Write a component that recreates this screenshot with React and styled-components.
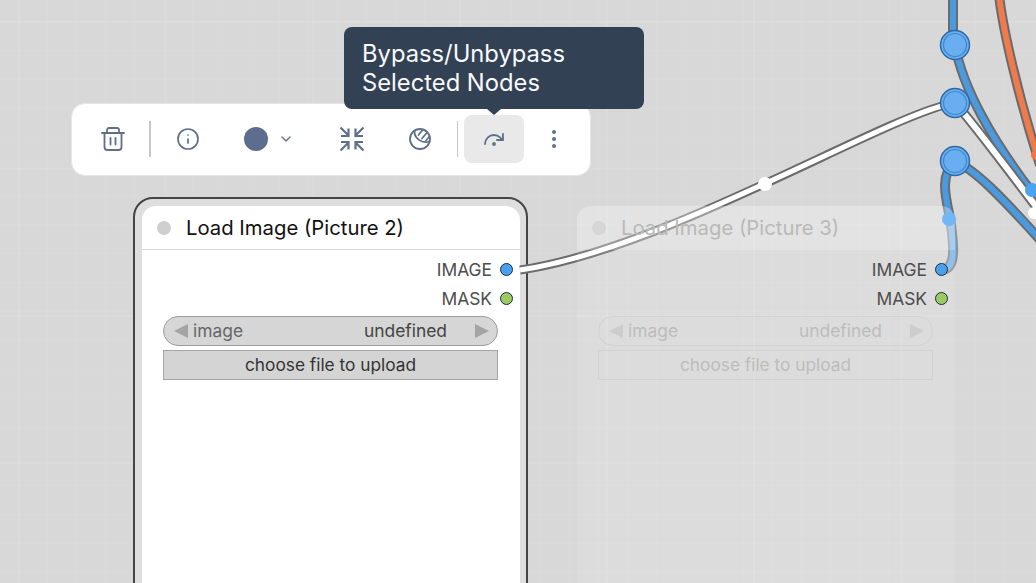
import React from "react";
import styled, { createGlobalStyle } from "styled-components";
import { ChevronDown, EllipsisVertical, Info, RedoDot } from "lucide-react";

const GlobalStyle = createGlobalStyle`
  html, body {
    margin: 0;
    height: 100%;
    overflow: hidden;
    font-family: "Inter", "Liberation Sans", sans-serif;
  }
`;

const Canvas = styled.div`
  position: relative;
  width: 1036px;
  height: 583px;
  overflow: hidden;
  background-color: #d8d8d8;
  background-image:
    linear-gradient(rgba(255, 255, 255, 0.08) 2px, transparent 2px),
    linear-gradient(90deg, rgba(255, 255, 255, 0.08) 2px, transparent 2px),
    linear-gradient(rgba(255, 255, 255, 0.05) 1px, transparent 1px),
    linear-gradient(90deg, rgba(255, 255, 255, 0.05) 1px, transparent 1px);
  background-size: 147px 147px, 147px 147px, 29px 29px, 29px 29px;
  background-position: 0 21px, 18px 0, 0 21px, 18px 0;
`;

const Wires = styled.svg`
  position: absolute;
  inset: 0;
`;

const Toolbar = styled.div`
  position: absolute;
  left: 71px;
  top: 103px;
  box-sizing: border-box;
  width: 520px;
  height: 73px;
  display: flex;
  align-items: center;
  padding: 0 5px 1px 11px;
  background: #fff;
  border: 1px solid #e6e6e6;
  border-radius: 14px;
  color: #5f6f8a;
`;

const ToolButton = styled.div`
  box-sizing: border-box;
  width: ${(p) => p.$width || 60}px;
  height: 48px;
  margin-left: ${(p) => p.$gap || 0}px;
  margin-right: ${(p) => p.$gapRight || 0}px;
  display: flex;
  align-items: center;
  justify-content: center;
  gap: 10px;
  border-radius: 8px;
  background: ${(p) => (p.$active ? "#e9e9e9" : "transparent")};
`;

const Divider = styled.div`
  width: ${(p) => (p.$thin ? 1 : 2)}px;
  height: 36px;
  margin: ${(p) => (p.$thin ? "0 6px 0 7px" : "0 7px 0 6px")};
  background: #c4c8ce;
`;

const Swatch = styled.span`
  width: 24px;
  height: 24px;
  border-radius: 50%;
  background: #5d6d8e;
`;

const Tooltip = styled.div`
  position: absolute;
  left: 344px;
  top: 27px;
  box-sizing: border-box;
  width: 300px;
  height: 82px;
  padding: 12px 18px;
  border-radius: 8px;
  background: #334155;
  color: #f8fafc;
  font-size: 23.75px;
  line-height: 29px;

  &::after {
    content: "";
    position: absolute;
    left: 143px;
    bottom: -6px;
    border-left: 7px solid transparent;
    border-right: 7px solid transparent;
    border-top: 6px solid #334155;
  }
`;

const SelectionFrame = styled.div`
  position: absolute;
  left: 133px;
  top: 197px;
  box-sizing: border-box;
  width: 395px;
  height: 480px;
  padding: 7px;
  border: 2px solid #444;
  border-radius: 20px;
  background: #dedede;
`;

const GhostSlot = styled.div`
  position: absolute;
  left: 577px;
  top: 206px;
  width: 378px;
  height: 471px;
`;

const Node = styled.div`
  width: 378px;
  height: 100%;
  border-radius: 14px;
  background: ${(p) => (p.$ghost ? "rgba(255, 255, 255, 0.12)" : "#fff")};
`;

const NodeHeader = styled.div`
  box-sizing: border-box;
  height: 44px;
  display: flex;
  align-items: center;
  gap: 15px;
  padding-left: 15px;
  border-radius: 14px 14px 0 0;
  border-bottom: 1px solid ${(p) => (p.$ghost ? "transparent" : "#d9d9d9")};
  background: ${(p) => (p.$ghost ? "rgba(255, 255, 255, 0.22)" : "transparent")};
  color: ${(p) => (p.$ghost ? "#b9b9b9" : "#111")};
  font-size: 20.3px;
`;

const StatusDot = styled.span`
  width: 14px;
  height: 14px;
  border-radius: 50%;
  background: ${(p) => (p.$ghost ? "#d6d6d6" : "#cfcfcf")};
`;

const NodeBody = styled.div`
  padding: 5px 0 0;
`;

const Output = styled.div`
  height: 29px;
  display: flex;
  align-items: center;
  justify-content: flex-end;
  gap: 8px;
  padding-right: 7px;
  color: #4d4d4d;
  font-size: 17.4px;
`;

const Port = styled.span`
  box-sizing: border-box;
  width: 13px;
  height: 13px;
  border-radius: 50%;
  border: 1.5px solid #1d2f3f;
  background: ${(p) => p.$color};
`;

const Combo = styled.div`
  box-sizing: border-box;
  height: 30px;
  margin: 3px 22px 0 21px;
  display: flex;
  align-items: center;
  padding: 0 8px 1px 10px;
  border-radius: 15px;
  border: 1.5px solid ${(p) => (p.$ghost ? "#d2d2d2" : "#9c9c9c")};
  background: ${(p) => (p.$ghost ? "transparent" : "#d6d6d6")};
  color: ${(p) => (p.$ghost ? "#bcbcbc" : "#444")};
  font-size: 17.4px;
`;

const ComboLabel = styled.span`
  margin-left: 5px;
  color: ${(p) => (p.$ghost ? "#bcbcbc" : "#666")};
`;

const ComboValue = styled.span`
  margin-left: auto;
  margin-right: 28px;
`;

const Arrow = styled.span`
  width: 0;
  height: 0;
  border-top: 7px solid transparent;
  border-bottom: 7px solid transparent;
  border-right: ${(p) => (p.$right ? "0" : `14px solid ${p.$ghost ? "#cdcdcd" : "#a4a4a4"}`)};
  border-left: ${(p) => (p.$right ? `14px solid ${p.$ghost ? "#cdcdcd" : "#a4a4a4"}` : "0")};
`;

const UploadButton = styled.div`
  box-sizing: border-box;
  height: 30px;
  margin: 4px 22px 0 21px;
  padding-bottom: 1px;
  display: flex;
  align-items: center;
  justify-content: center;
  border: 1.5px solid ${(p) => (p.$ghost ? "#d2d2d2" : "#a4a4a4")};
  background: ${(p) => (p.$ghost ? "transparent" : "#d4d4d4")};
  color: ${(p) => (p.$ghost ? "#bcbcbc" : "#333")};
  font-size: 17.3px;
`;

function TrashIcon() {
  return (
    <svg width="24" height="24" viewBox="0 0 24 24" fill="none" stroke="currentColor" strokeWidth="1.8" strokeLinecap="round" strokeLinejoin="round">
      <path d="M1 6h22" />
      <path d="M6 6V3a2 2 0 0 1 2-2h8a2 2 0 0 1 2 2v3" />
      <path d="M3.5 6v14a3 3 0 0 0 3 3h11a3 3 0 0 0 3-3V6" />
      <path d="M9.5 11v6.5M14.5 11v6.5" />
    </svg>
  );
}

function CollapseIcon() {
  return (
    <svg width="26" height="26" viewBox="0 0 26 26" fill="none" stroke="currentColor" strokeWidth="2.2" strokeLinejoin="miter">
      <path d="M1.500 1.500L9 9M2 10H9.500V2.500" />
      <path d="M24.500 1.500L17 9M24 10H16.500V2.500" />
      <path d="M1.500 24.500L9 17M2 16H9.500V23.500" />
      <path d="M24.500 24.500L17 17M24 16H16.500V23.500" />
    </svg>
  );
}

function PaletteIcon() {
  return (
    <svg width="24" height="24" viewBox="0 0 24 24" fill="none" stroke="currentColor" strokeWidth="1.8" strokeLinecap="round">
      <circle cx="12" cy="12" r="10" />
      <path d="M6.500 4C6 10.500 13 17 21.500 14.500" />
      <path d="M10.500 8L14.500 3M14 11.500L19 5.500M18 13.500L21.500 9.500" />
    </svg>
  );
}

function Reroute({ x, y }) {
  return (
    <g>
      <circle cx={x} cy={y} r="14.500" fill="#68aef0" stroke="#2f69a3" strokeWidth="1.500" />
      <circle cx={x} cy={y} r="11.500" fill="#68aef0" stroke="#3f86c9" strokeWidth="1.200" />
    </g>
  );
}

function Wire({ d, color, edge = "#6b6b6b", width = 6 }) {
  return (
    <g fill="none">
      <path d={d} stroke={edge} strokeWidth={width + 4} />
      <path d={d} stroke={color} strokeWidth={width} />
    </g>
  );
}

function NodeContent({ title, ghost }) {
  return (
    <Node $ghost={ghost}>
      <NodeHeader $ghost={ghost}>
        <StatusDot $ghost={ghost} />
        {title}
      </NodeHeader>
      <NodeBody>
        <Output>
          IMAGE
          <Port $color="#4b9fec" />
        </Output>
        <Output>
          MASK
          <Port $color="#9cc963" />
        </Output>
        <Combo $ghost={ghost}>
          <Arrow $ghost={ghost} />
          <ComboLabel $ghost={ghost}>image</ComboLabel>
          <ComboValue>undefined</ComboValue>
          <Arrow $right $ghost={ghost} />
        </Combo>
        <UploadButton $ghost={ghost}>choose file to upload</UploadButton>
      </NodeBody>
    </Node>
  );
}

export default function App() {
  return (
    <Canvas>
      <GlobalStyle />
      <SelectionFrame>
        <NodeContent title="Load Image (Picture 2)" />
      </SelectionFrame>

      <Wires width="1036" height="583" viewBox="0 0 1036 583">
        <Wire d="M953 -5V45" color="#4b9ae0" />
        <Wire d="M999 -5C1003 30 1018 95 1040 165" color="#ef7a4b" />
        <Wire d="M955 45C962 85 990 140 1042 205" color="#4b9ae0" />
        <Wire d="M955 161C975 170 1000 195 1042 242" color="#4b9ae0" />
        <Wire d="M955 103C975 125 1000 160 1042 214" color="#fff" />
        <Wire d="M520 270C660 250 870 125 945 105" color="#fff" width={5} />
        <Wire d="M955 161C940 175 945 195 950 218" color="#4b9ae0" />
        <Wire d="M950 218C954 245 957 270 941 270" color="#7fb8ec" edge="#8e9296" />
        <circle cx="1032" cy="190" r="7" fill="#4ba3ee" />
        <circle cx="1036" cy="155" r="5" fill="#f0784a" />
        <circle cx="1034" cy="213" r="6" fill="#fff" />
        <circle cx="765" cy="184" r="7" fill="#fff" />
        <Reroute x={955} y={45} />
        <Reroute x={955} y={103} />
        <Reroute x={955} y={161} />
      </Wires>

      <GhostSlot>
        <NodeContent title="Load Image (Picture 3)" ghost />
      </GhostSlot>

      <Wires width="1036" height="583" viewBox="0 0 1036 583">
        <circle cx="949" cy="219" r="7" fill="#72b6f5" />
      </Wires>

      <Toolbar>
        <ToolButton><TrashIcon /></ToolButton>
        <Divider />
        <ToolButton><Info size={24} strokeWidth={1.7} /></ToolButton>
        <ToolButton $width={86} $gap={8} $gapRight={10}>
          <Swatch />
          <ChevronDown size={16} />
        </ToolButton>
        <ToolButton><CollapseIcon /></ToolButton>
        <ToolButton $gap={8}><PaletteIcon /></ToolButton>
        <Divider $thin />
        <ToolButton $active><RedoDot size={24} strokeWidth={1.8} /></ToolButton>
        <ToolButton><EllipsisVertical size={24} strokeWidth={2} /></ToolButton>
      </Toolbar>

      <Tooltip>
        Bypass/Unbypass
        <br />
        Selected Nodes
      </Tooltip>
    </Canvas>
  );
}
